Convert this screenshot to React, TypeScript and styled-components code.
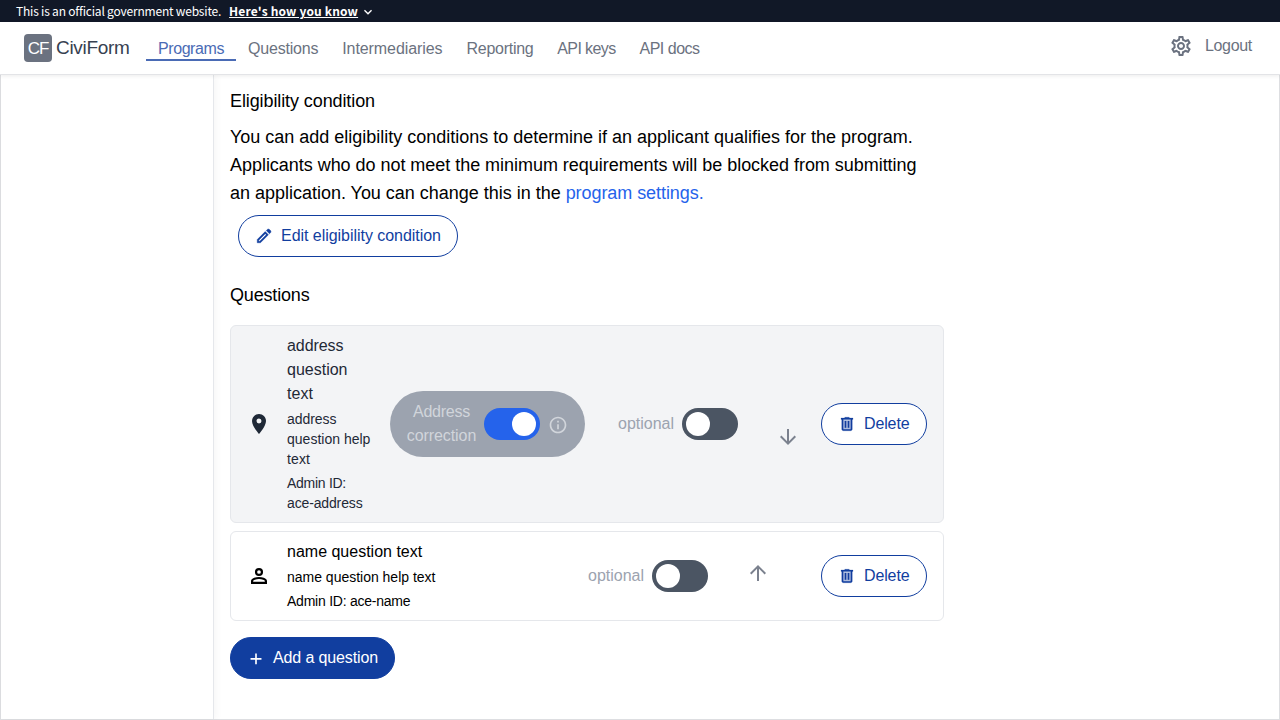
import React from "react";
import styled, { createGlobalStyle } from "styled-components";
import {
  MdPlace,
  MdArrowDownward,
  MdArrowUpward,
  MdOutlineSettings,
  MdOutlineInfo,
  MdExpandMore,
} from "react-icons/md";

const blue = "#113e9f";

const Global = createGlobalStyle`
  *, *::before, *::after { box-sizing: border-box; }
  body {
    margin: 0;
    background: #fff;
    color: #000;
    font-family: "Liberation Sans", Arial, sans-serif;
    font-size: 16px;
    line-height: 24px;
    overflow: hidden;
  }
  svg { display: block; flex: none; }
`;

const Page = styled.div`
  display: flex;
  flex-direction: column;
  height: 720px;
`;

const Text = styled.span<{ $track?: number }>`
  letter-spacing: ${(p) => p.$track ?? 0}px;
  white-space: nowrap;
`;

const Banner = styled.div`
  display: flex;
  align-items: center;
  height: 22px;
  flex: none;
  padding: 0 16px;
  background: #111827;
  color: #fff;
  font-family: "Noto Sans CJK SC", sans-serif;
  font-size: 12px;
  line-height: 18px;
`;

const BannerLink = styled.a`
  margin-left: 8px;
  font-weight: 700;
  letter-spacing: 0.16px;
  text-decoration: underline;
  white-space: nowrap;
`;

const BannerCaret = styled(MdExpandMore)`
  margin: 2px 0 0 2px;
`;

const Header = styled.header`
  position: relative;
  display: flex;
  height: 53px;
  flex: none;
  padding: 0 28px 0 24px;
  background: #fff;
  border-bottom: 1px solid #e3e4e7;
  box-shadow: 0 1px 4px rgba(0, 0, 0, 0.08);
  color: #6b7280;
`;

const Brand = styled.div`
  display: flex;
  align-items: center;
  gap: 4px;
  width: 122px;
  height: 28px;
  margin-top: 12px;
  font-size: 19px;
  line-height: 28px;
  color: #374151;
`;

const BrandMark = styled.div`
  display: flex;
  align-items: center;
  justify-content: center;
  width: 28px;
  height: 28px;
  padding-top: 2px;
  border-radius: 4px;
  background: #6b7280;
  color: #fff;
  font-size: 17px;
`;

const Nav = styled.nav`
  display: flex;
  align-items: flex-start;
  padding-top: 15px;
`;

const NavItem = styled.a<{ $width: number; $active?: boolean }>`
  width: ${(p) => p.$width}px;
  height: 24px;
  padding-left: 12px;
  border-bottom: 2px solid ${(p) => (p.$active ? "#4a6bb5" : "transparent")};
  color: ${(p) => (p.$active ? "#4a6bb5" : "#6b7280")};
`;

const HeaderActions = styled.div`
  display: flex;
  align-items: center;
  gap: 12px;
  height: 24px;
  margin: 12px 0 0 auto;
`;

const Body = styled.div`
  display: flex;
  flex: 1;
  border: 1px solid #dddee1;
  border-top: 0;
`;

const Sidebar = styled.aside`
  width: 213px;
  border-right: 1px solid #e5e7eb;
  box-shadow: 2px 0 8px rgba(0, 0, 0, 0.04);
`;

const Main = styled.main`
  width: 730px;
  padding: 12px 0 0 16px;
`;

const Heading = styled.h2`
  margin: 0;
  font-size: 18px;
  font-weight: 400;
  line-height: 28px;
`;

const Paragraph = styled.p`
  display: flex;
  flex-direction: column;
  margin: 8px 0;
  font-size: 18px;
  line-height: 28px;
`;

const Link = styled.a`
  color: #2563eb;
  letter-spacing: -0.065px;
`;

const Button = styled.button<{ $width: number; $solid?: boolean }>`
  display: flex;
  align-items: center;
  gap: 8px;
  width: ${(p) => p.$width}px;
  height: 42px;
  flex: none;
  padding: 0 16px;
  border: 1px solid ${blue};
  border-radius: 21px;
  background: ${(p) => (p.$solid ? blue : "#fff")};
  color: ${(p) => (p.$solid ? "#fff" : blue)};
  font: inherit;
`;

const EditRow = styled.div`
  padding: 0 0 24px 8px;
`;

const QuestionList = styled.div`
  display: flex;
  flex-direction: column;
  gap: 8px;
  margin: 16px 0;
`;

const Card = styled.div<{ $muted?: boolean }>`
  display: flex;
  align-items: center;
  width: 714px;
  padding: 8px 16px;
  border: 1px solid #e5e7eb;
  border-radius: 6px;
  background: ${(p) => (p.$muted ? "#f3f4f6" : "#fff")};
  color: ${(p) => (p.$muted ? "#1f2937" : "#000")};
`;

const Details = styled.div<{ $width: number }>`
  display: flex;
  flex-direction: column;
  gap: 4px;
  width: ${(p) => p.$width}px;
  margin-left: 16px;
`;

const Title = styled.div`
  display: flex;
  flex-direction: column;
`;

const Small = styled.div`
  display: flex;
  flex-direction: column;
  margin: -1px 0 1px;
  font-size: 14px;
  line-height: 20px;
`;

const CorrectionPill = styled.div`
  display: flex;
  align-items: center;
  gap: 8px;
  width: 195px;
  height: 66px;
  margin-right: 33px;
  padding: 0 16px;
  border-radius: 33px;
  background: #9ca3af;
  color: #d1d5db;
`;

const PillLabel = styled.div`
  display: flex;
  flex-direction: column;
  align-items: center;
  width: 70px;
  padding-left: 1px;
`;

const InfoIcon = styled(MdOutlineInfo)`
  margin-top: 2px;
`;

const OptionalLabel = styled.span`
  width: 64px;
  color: #9ca3af;
`;

const Toggle = styled.span<{ $on?: boolean }>`
  display: flex;
  justify-content: ${(p) => (p.$on ? "flex-end" : "flex-start")};
  width: 56px;
  height: 32px;
  flex: none;
  padding: 4px;
  border-radius: 16px;
  background: ${(p) => (p.$on ? "#2563eb" : "#4b5563")};
`;

const Knob = styled.span`
  width: 24px;
  height: 24px;
  border-radius: 50%;
  background: #fff;
`;

const MoveSlot = styled.div<{ $dir: "up" | "down" }>`
  margin-left: 38px;
  padding: ${(p) => (p.$dir === "down" ? "26px 0 0" : "0 0 6px")};
  color: #7b818e;
`;

const Right = styled.div`
  margin-left: auto;
`;

const PersonIcon = () => (
  <svg width="24" height="24" viewBox="0 0 24 24" fill="none" stroke="currentColor" strokeWidth="2.2">
    <circle cx="12" cy="8" r="2.95" />
    <path d="M5.100 18.900v-1.900c0-2.100 4.300-3 6.900-3s6.900.900 6.900 3v1.900Z" />
  </svg>
);

const EditIcon = () => (
  <svg width="18" height="18" viewBox="0 0 24 24" fill="currentColor" stroke="currentColor" strokeWidth="0.6">
    <path d="M5 19h1.4l8.625-8.625-1.4-1.4L5 17.6V19ZM19.3 8.925l-4.25-4.2 1.4-1.4q.575-.575 1.413-.575t1.412.575l1.4 1.4q.575.575.6 1.388t-.55 1.387L19.3 8.925ZM17.85 10.4 7.25 21H3v-4.25l10.6-10.6 4.25 4.25Z" />
  </svg>
);

const TrashIcon = () => (
  <svg width="18" height="18" viewBox="0 0 24 24" fill="currentColor">
    <path d="M6 6h12v14H6Z" opacity="0.28" />
    <path
      d="M7 21q-.825 0-1.412-.587T5 19V6H4V4h5V3h6v1h5v2h-1v13q0 .825-.587 1.413T17 21H7ZM17 6H7v13h10V6ZM9 17h2V8H9v9Zm4 0h2V8h-2v9Z"
      stroke="currentColor"
      strokeWidth="0.3"
    />
  </svg>
);

const PlusIcon = () => (
  <svg width="18" height="18" viewBox="0 0 24 24" fill="currentColor">
    <path d="M10.900 20.300v-6h-6.200v-2.200h6.200V6h2.200v6.100h6.200v2.200h-6.200v6Z" />
  </svg>
);

const navItems = [
  { label: "Programs", width: 90, track: -0.42 },
  { label: "Questions", width: 94.25, track: -0.2 },
  { label: "Intermediaries", width: 124.25, track: -0.08 },
  { label: "Reporting", width: 90.75, track: -0.27 },
  { label: "API keys", width: 82.25, track: -0.6 },
  { label: "API docs", width: 84, track: -0.5 },
];

interface Line {
  text: string;
  track: number;
}

interface Question {
  kind: "address" | "name";
  width: number;
  title: Line[];
  help: Line[];
  admin: Line[];
  move: "up" | "down";
}

const questions: Question[] = [
  {
    kind: "address",
    width: 103,
    title: [
      { text: "address", track: -0.06 },
      { text: "question", track: 0 },
      { text: "text", track: 0.05 },
    ],
    help: [
      { text: "address", track: -0.04 },
      { text: "question help", track: 0.01 },
      { text: "text", track: 0.1 },
    ],
    admin: [
      { text: "Admin ID:", track: -0.28 },
      { text: "ace-address", track: -0.14 },
    ],
    move: "down",
  },
  {
    kind: "name",
    width: 301,
    title: [{ text: "name question text", track: 0 }],
    help: [{ text: "name question help text", track: -0.01 }],
    admin: [{ text: "Admin ID: ace-name", track: -0.24 }],
    move: "up",
  },
];

const renderLines = (lines: Line[]) =>
  lines.map((line) => (
    <Text key={line.text} $track={line.track}>
      {line.text}
    </Text>
  ));

function QuestionCard({ q }: { q: Question }) {
  const isAddress = q.kind === "address";
  return (
    <Card $muted={isAddress}>
      {isAddress ? <MdPlace size={24} /> : <PersonIcon />}
      <Details $width={q.width}>
        <Title>{renderLines(q.title)}</Title>
        <Small>{renderLines(q.help)}</Small>
        <Small>{renderLines(q.admin)}</Small>
      </Details>
      {isAddress && (
        <CorrectionPill>
          <PillLabel>
            <Text $track={-0.24}>Address</Text>
            <Text $track={-0.08}>correction</Text>
          </PillLabel>
          <Toggle $on>
            <Knob />
          </Toggle>
          <InfoIcon size={20} />
        </CorrectionPill>
      )}
      <OptionalLabel>optional</OptionalLabel>
      <Toggle>
        <Knob />
      </Toggle>
      <MoveSlot $dir={q.move}>
        {q.move === "down" ? <MdArrowDownward size={24} /> : <MdArrowUpward size={24} />}
      </MoveSlot>
      <Right>
        <Button $width={106}>
          <TrashIcon />
          <Text $track={-0.13}>Delete</Text>
        </Button>
      </Right>
    </Card>
  );
}

export default function App() {
  return (
    <Page>
      <Global />
      <Banner>
        <Text $track={-0.2}>This is an official government website.</Text>
        <BannerLink>Here's how you know</BannerLink>
        <BannerCaret size={16} />
      </Banner>
      <Header>
        <Brand>
          <BrandMark>
            <Text $track={-1.1}>CF</Text>
          </BrandMark>
          <Text $track={-0.3}>CiviForm</Text>
        </Brand>
        <Nav>
          {navItems.map((item, i) => (
            <NavItem key={item.label} $width={item.width} $active={i === 0}>
              <Text $track={item.track}>{item.label}</Text>
            </NavItem>
          ))}
        </Nav>
        <HeaderActions>
          <MdOutlineSettings size={24} />
          <Text $track={-0.31}>Logout</Text>
        </HeaderActions>
      </Header>
      <Body>
        <Sidebar />
        <Main>
          <Heading>
            <Text $track={-0.1}>Eligibility condition</Text>
          </Heading>
          <Paragraph>
            <Text $track={-0.01}>
              You can add eligibility conditions to determine if an applicant qualifies for the program.
            </Text>
            <Text $track={-0.034}>
              Applicants who do not meet the minimum requirements will be blocked from submitting
            </Text>
            <Text $track={-0.014}>
              an application. You can change this in the <Link>program settings.</Link>
            </Text>
          </Paragraph>
          <EditRow>
            <Button $width={220}>
              <EditIcon />
              <Text $track={-0.04}>Edit eligibility condition</Text>
            </Button>
          </EditRow>
          <Heading>
            <Text $track={-0.17}>Questions</Text>
          </Heading>
          <QuestionList>
            {questions.map((q) => (
              <QuestionCard key={q.kind} q={q} />
            ))}
          </QuestionList>
          <Button $width={165} $solid>
            <PlusIcon />
            <Text $track={-0.13}>Add a question</Text>
          </Button>
        </Main>
      </Body>
    </Page>
  );
}
